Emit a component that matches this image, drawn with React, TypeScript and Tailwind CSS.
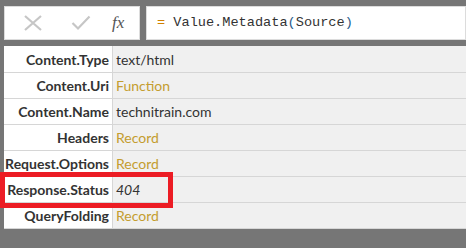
import React from "react";

type Row = {
  label: string;
  value: string;
  kind: "text" | "link" | "italic";
};

const rows: Row[] = [
  { label: "Content.Type", value: "text/html", kind: "text" },
  { label: "Content.Uri", value: "Function", kind: "link" },
  { label: "Content.Name", value: "technitrain.com", kind: "text" },
  { label: "Headers", value: "Record", kind: "link" },
  { label: "Request.Options", value: "Record", kind: "link" },
  { label: "Response.Status", value: "404", kind: "italic" },
  { label: "QueryFolding", value: "Record", kind: "link" },
];

const valueClass = {
  text: "text-[#333333]",
  link: "text-[#c49d2f]",
  italic: "italic text-[#333333]",
};

const App: React.FC = () => {
  return (
    <div
      className="relative flex h-[248px] w-[466px] flex-col overflow-hidden bg-[#767676] pt-[6px]"
      style={{ fontFamily: 'Lato, "Open Sans", sans-serif' }}
    >
      {/* Formula bar */}
      <div className="flex h-[34px] gap-[6px] pl-[4px]">
        <div className="flex w-[136px] items-center border border-[#dcdcdc] bg-white">
          <svg width="18" height="16" viewBox="0 0 18 16" className="ml-[19px]">
            <path d="M1 1 L17 15 M17 1 L1 15" stroke="#c6c6c6" strokeWidth="2.2" fill="none" />
          </svg>
          <svg width="20" height="16" viewBox="0 0 20 16" className="ml-[29px]">
            <path d="M1.5 8 L7 13.5 L18.5 1.5" stroke="#c6c6c6" strokeWidth="2.2" fill="none" />
          </svg>
          <span
            className="ml-[21px] text-[17px] italic text-[#555555]"
            style={{ fontFamily: '"Liberation Serif", serif' }}
          >
            fx
          </span>
        </div>
        <div className="flex flex-1 items-center border border-[#dcdcdc] bg-white pl-[10px]">
          <span
            className="text-[13.6px] text-[#333333]"
            style={{ fontFamily: '"Liberation Mono", "DejaVu Sans Mono", monospace' }}
          >
            <span className="text-[#d08000]">=</span> Value.Metadata
            <span className="text-[#2a5c8a]">(</span>Source<span className="text-[#2a5c8a]">)</span>
          </span>
        </div>
      </div>

      {/* Record table */}
      <div className="mt-[6px] pl-[4px]">
        <div className="flex flex-col">
          {rows.map((r, i) => (
            <div
              key={r.label}
              className={`flex ${i === 0 ? "h-[27px]" : "h-[26px]"} border-b border-[#d6d6d6]`}
            >
              <div className="flex w-[109px] items-center justify-end border-r border-[#d6d6d6] bg-white pr-[3px] text-[14px] font-bold text-[#333333]">
                {r.label}
              </div>
              <div
                className={`flex flex-1 items-center bg-[#f0f0f0] pl-[3px] text-[14px] ${valueClass[r.kind]}`}
              >
                {r.value}
              </div>
            </div>
          ))}
        </div>
      </div>

      {/* Highlight */}
      <div className="absolute left-0 top-[172px] h-[36px] w-[173px] border-[5px] border-[#ec1c24]" />
    </div>
  );
};

export default App;
